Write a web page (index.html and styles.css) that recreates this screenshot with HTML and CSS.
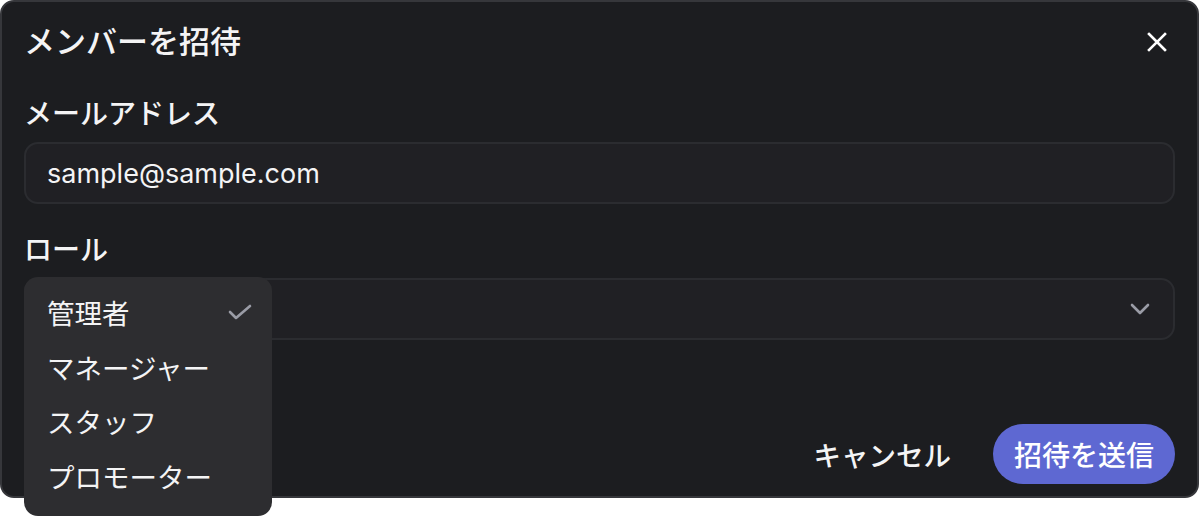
FILE: index.html
```html
<!DOCTYPE html>
<html lang="ja">
<head>
    <meta charset="UTF-8">
    <meta name="viewport" content="width=device-width, initial-scale=1.0">
    <title>メンバーを招待</title>
    <link rel="stylesheet" href="styles.css">
</head>
<body>
    <div class="modal">
        <div class="modal-header">
            <h1 class="modal-title">メンバーを招待</h1>
            <button class="close-btn" aria-label="閉じる">
                <svg width="20" height="20" viewBox="0 0 20 20" fill="none" stroke="#fff" stroke-width="2.6" stroke-linecap="square">
                    <path d="M2 2 L18 18 M18 2 L2 18"/>
                </svg>
            </button>
        </div>

        <label class="field-label">メールアドレス</label>
        <div class="field">sample@sample.com</div>

        <label class="field-label field-label-second">ロール</label>
        <div class="field field-select">
            <svg class="chevron" width="20" height="12" viewBox="0 0 20 12" fill="none" stroke="#9a9ca6" stroke-width="2.6" stroke-linecap="round" stroke-linejoin="round">
                <path d="M2 2 L10 10 L18 2"/>
            </svg>
        </div>

        <div class="modal-footer">
            <button class="btn-cancel">キャンセル</button>
            <button class="btn-primary">招待を送信</button>
        </div>

        <!-- open role menu -->
        <ul class="dropdown">
            <li class="dropdown-item">
                <span>管理者</span>
                <svg width="24" height="16" viewBox="0 0 24 16" fill="none" stroke="#9a9ca6" stroke-width="2.6" stroke-linecap="round" stroke-linejoin="round">
                    <path d="M2 8 L8 14 L22 2"/>
                </svg>
            </li>
            <li class="dropdown-item">マネージャー</li>
            <li class="dropdown-item">スタッフ</li>
            <li class="dropdown-item">プロモーター</li>
        </ul>
    </div>
</body>
</html>
```

FILE: styles.css
```css
html, body {
    min-height: 516px;
}
body {
    margin: 0;
    background: #fff;
    font-family: "Inter", "Noto Sans CJK JP", sans-serif;
    color: #f4f4f5;
}
.modal {
    position: relative;
    width: 1199px;
    box-sizing: border-box;
    background: #1c1d20;
    border: 2px solid #36373b;
    border-radius: 14px;
    padding: 20px 22px 12px 22px;
    display: flex;
    flex-direction: column;
}
.modal-header {
    display: flex;
    justify-content: space-between;
    align-items: center;
    height: 40px;
}
.modal-title {
    margin: 0;
    font-size: 31px;
    line-height: 40px;
    font-weight: 500;
}
.close-btn {
    background: none;
    border: none;
    padding: 0;
    margin-right: 8px;
    width: 20px;
    height: 20px;
    display: flex;
    cursor: pointer;
}
.field-label {
    margin-top: 34px;
    font-size: 28px;
    line-height: 36px;
    font-weight: 500;
}
.field-label-second {
    margin-top: 28px;
}
.field {
    margin-top: 10px;
    height: 62px;
    box-sizing: border-box;
    background: #202024;
    border: 2px solid #2b2c30;
    border-radius: 14px;
    padding: 0 21px;
    display: flex;
    align-items: center;
    font-size: 27px;
}
.field-select {
    justify-content: flex-end;
}
.chevron {
    margin-right: 2px;
}
.modal-footer {
    margin-top: 84px;
    display: flex;
    justify-content: flex-end;
    align-items: center;
    gap: 42px;
}
.btn-cancel {
    background: none;
    border: none;
    padding: 0;
    color: #f4f4f5;
    font-family: inherit;
    font-size: 27.5px;
    font-weight: 500;
}
.btn-primary {
    height: 60px;
    padding: 0 21px;
    border: none;
    border-radius: 30px;
    background: #5e68d2;
    color: #fff;
    font-family: inherit;
    font-size: 28px;
    font-weight: 500;
}
.dropdown {
    position: absolute;
    left: 22px;
    top: 275px;
    width: 248px;
    box-sizing: border-box;
    margin: 0;
    padding: 8px 20px 13px 23px;
    list-style: none;
    background: #2d2d30;
    border-radius: 14px;
}
.dropdown-item {
    height: 54.5px;
    display: flex;
    align-items: center;
    justify-content: space-between;
    font-size: 27.5px;
}
```
